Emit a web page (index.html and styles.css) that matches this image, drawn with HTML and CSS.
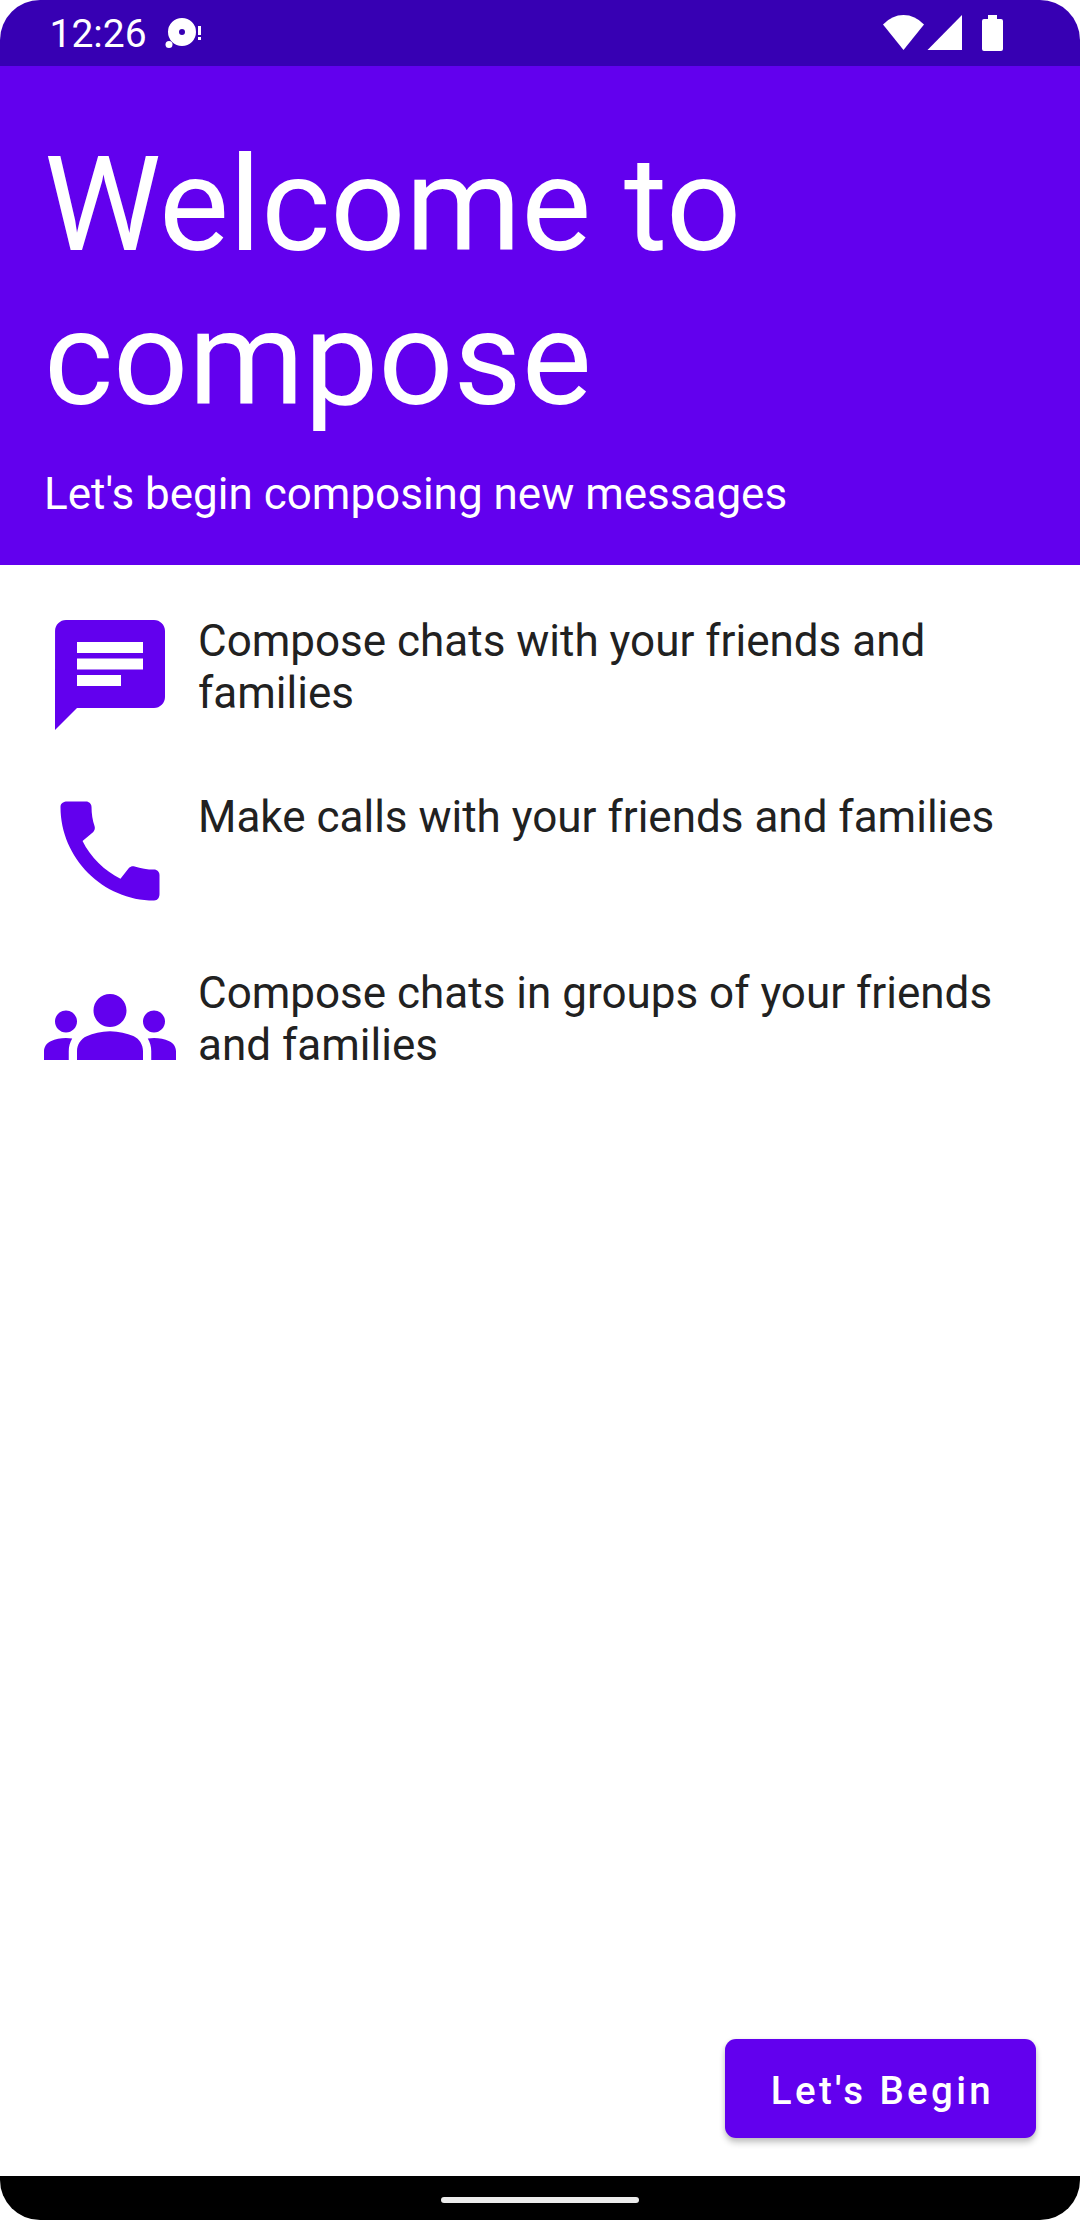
FILE: index.html
```html
<!DOCTYPE html>
<html lang="en">
<head>
<meta charset="utf-8">
<title>Welcome to compose</title>
<link rel="stylesheet" href="styles.css">
</head>
<body>
<div class="screen">
  <div class="status-bar">
    <span class="clock">12:26</span>
    <svg class="notification" width="37" height="32" viewBox="165 17 37 32">
      <path fill-rule="evenodd" d="M182 18a14 14 0 1 1 0 28a14 14 0 1 1 0-28zM182 29a3 3 0 1 0 0 6a3 3 0 1 0 0-6z"/>
      <circle cx="169" cy="44.5" r="3.5"/>
      <path d="M198 26h3v9h-3zM198 37h3v3h-3z"/>
    </svg>
    <svg class="system-icons" width="122" height="38" viewBox="882 14 122 38">
      <path d="M903.5 50L883 24.5Q892 15 903.5 15T924 24.5z"/>
      <path d="M927.5 50H962V15z"/>
      <path d="M988 15h9v4h4a2 2 0 0 1 2 2v28a2 2 0 0 1-2 2h-17a2 2 0 0 1-2-2V21a2 2 0 0 1 2-2h4z"/>
    </svg>
  </div>
  <header class="header">
    <h1 class="title">Welcome to compose</h1>
    <p class="subtitle">Let's begin composing new messages</p>
  </header>
  <main class="content">
    <ul class="features">
      <li class="feature">
        <svg class="feature-icon" viewBox="0 0 24 24"><path d="M20 2H4c-1.1 0-1.99.9-1.99 2L2 22l4-4h14c1.1 0 2-.9 2-2V4c0-1.1-.9-2-2-2zM6 9h12v2H6V9zm8 5H6v-2h8v2zm4-6H6V6h12v2z"/></svg>
        <p class="feature-text">Compose chats with your friends and families</p>
      </li>
      <li class="feature">
        <svg class="feature-icon" viewBox="0 0 24 24"><path d="M20.01 15.38c-1.23 0-2.42-.2-3.53-.56-.35-.12-.74-.03-1.01.24l-1.57 1.97c-2.83-1.35-5.48-3.9-6.89-6.83l1.95-1.66c.27-.28.35-.67.24-1.02-.37-1.11-.56-2.3-.56-3.53 0-.54-.45-.99-.99-.99H4.19C3.65 3 3 3.24 3 3.99 3 13.28 10.73 21 20.01 21c.71 0 .99-.63.99-1.18v-3.45c0-.54-.45-.99-.99-.99z"/></svg>
        <p class="feature-text">Make calls with your friends and families</p>
      </li>
      <li class="feature">
        <svg class="feature-icon" viewBox="0 0 24 24"><path d="M12 12.75c1.63 0 3.07.39 4.24.9 1.08.48 1.76 1.56 1.76 2.73V18H6v-1.61c0-1.18.68-2.26 1.76-2.73 1.17-.52 2.61-.91 4.24-.91zM4 13c1.1 0 2-.9 2-2s-.9-2-2-2-2 .9-2 2 .9 2 2 2zm1.13 1.1c-.37-.06-.74-.1-1.13-.1-.99 0-1.93.21-2.78.58C.48 14.9 0 15.62 0 16.43V18h4.5v-1.61c0-.83.23-1.61.63-2.29zM20 13c1.1 0 2-.9 2-2s-.9-2-2-2-2 .9-2 2 .9 2 2 2zm4 3.43c0-.81-.48-1.53-1.22-1.85-.85-.37-1.79-.58-2.78-.58-.39 0-.76.04-1.13.1.4.68.63 1.46.63 2.29V18H24v-1.57zM12 6c1.66 0 3 1.34 3 3s-1.34 3-3 3-3-1.34-3-3 1.34-3 3-3z"/></svg>
        <p class="feature-text">Compose chats in groups of your friends and families</p>
      </li>
    </ul>
    <button class="begin" type="button">Let's Begin</button>
  </main>
  <div class="nav-bar"><div class="nav-handle"></div></div>
</div>
</body>
</html>
```
FILE: styles.css
```css
* {
  box-sizing: border-box;
  margin: 0;
  padding: 0;
}

body {
  background: #fff;
  font-family: Roboto, "Liberation Sans", sans-serif;
}

.screen {
  display: flex;
  flex-direction: column;
  width: 1080px;
  height: 2220px;
  border-radius: 40px;
  overflow: hidden;
  background: #fff;
}

.status-bar {
  display: flex;
  align-items: flex-start;
  flex: none;
  height: 66px;
  padding: 0 76px 0 49.5px;
  background: #3700b3;
  color: #fff;
  fill: #fff;
}

.clock {
  width: 96px;
  margin-top: 12px;
  font-size: 39px;
  line-height: 45px;
  white-space: nowrap;
}

.notification {
  margin: 17px 0 0 19.5px;
}

.system-icons {
  margin: 14px 0 0 auto;
}

.header {
  flex: none;
  height: 499px;
  padding: 62px 44px 0;
  background: #6200ee;
  color: #fff;
}

.title {
  width: 800px;
  font-size: 132px;
  font-weight: 400;
  line-height: 154px;
}

.subtitle {
  margin-top: 32px;
  font-size: 44px;
  line-height: 52px;
}

.content {
  display: flex;
  flex: 1;
  flex-direction: column;
  justify-content: space-between;
  padding: 44px 44px 38px;
}

.features {
  display: flex;
  flex-direction: column;
  gap: 44px;
  list-style: none;
}

.feature {
  display: flex;
  gap: 22px;
  height: 132px;
}

.feature-icon {
  flex: none;
  width: 132px;
  height: 132px;
  fill: #6200ee;
}

.feature-text {
  padding-top: 6px;
  color: #212121;
  font-size: 44px;
  line-height: 52px;
}

.begin {
  align-self: flex-end;
  width: 311px;
  height: 99px;
  padding: 4px 0 0 4px;
  border: 0;
  border-radius: 11px;
  background: #6200ee;
  box-shadow: 0 5px 6px rgba(0, 0, 0, 0.2), 0 1px 5px rgba(0, 0, 0, 0.1);
  color: #fff;
  font-family: inherit;
  font-size: 38.5px;
  font-weight: 500;
  letter-spacing: 3.35px;
  white-space: nowrap;
}

.nav-bar {
  display: flex;
  align-items: flex-start;
  justify-content: center;
  flex: none;
  height: 44px;
  padding-top: 21px;
  background: #000;
}

.nav-handle {
  width: 198px;
  height: 6px;
  border-radius: 3px;
  background: #ebebeb;
}
```
